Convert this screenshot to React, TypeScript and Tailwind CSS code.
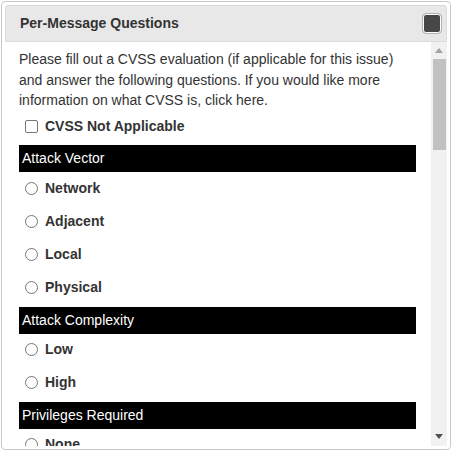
import React from "react";

const Radio = ({ label }: { label: string }) => (
  <div className="h-[33px] flex items-center pl-[6px]">
    <span className="w-[13px] h-[13px] rounded-full border border-[#767676] bg-white shrink-0" />
    <span className="ml-[7px] font-bold text-[14px] text-[#333]">{label}</span>
  </div>
);

const Bar = ({ label }: { label: string }) => (
  <div className="h-[27px] bg-black text-white text-[14px] flex items-center pl-[3px]">{label}</div>
);

export default function App() {
  return (
    <div
      className="ml-[1px] mt-[1px] w-[450px] h-[449px] border border-[#c8c8c8] rounded-[4px] p-[3px] flex flex-col overflow-hidden bg-white"
      style={{ fontFamily: '"Liberation Sans", Arial, sans-serif' }}
    >
      <div className="h-[37px] shrink-0 bg-[#e8e8e8] border border-[#dadada] rounded-t-[3px] flex items-center justify-between pl-[14px] pr-[5px]">
        <span className="font-bold text-[14px] text-[#333]">Per-Message Questions</span>
        <span className="w-[18px] h-[19px] bg-[#474747] border border-white rounded-[3px] outline outline-1 outline-[#b0b0b0]" />
      </div>
      <div className="flex-1 flex min-h-0 overflow-hidden">
        <div className="flex-1 pl-[14px] pr-[15px] pt-[7px] text-[#333] overflow-hidden">
          <p className="text-[14px] leading-[20.5px]">
            Please fill out a CVSS evaluation (if applicable for this issue) and answer the following questions. If you would like more information on what CVSS is, click here.
          </p>
          <div className="h-[22px] flex items-center pl-[6px] mt-[5px]">
            <span className="w-[13px] h-[13px] rounded-[2px] border border-[#767676] bg-white shrink-0" />
            <span className="ml-[7px] font-bold text-[14px]">CVSS Not Applicable</span>
          </div>
          <div className="mt-[7px]">
            <Bar label="Attack Vector" />
            <Radio label="Network" />
            <Radio label="Adjacent" />
            <Radio label="Local" />
            <Radio label="Physical" />
          </div>
          <div className="mt-[3px]">
            <Bar label="Attack Complexity" />
            <div className="-mt-[1px]">
              <Radio label="Low" />
              <Radio label="High" />
            </div>
          </div>
          <div className="mt-[3px]">
            <Bar label="Privileges Required" />
            <div className="-mt-[1px]">
              <Radio label="None" />
            </div>
          </div>
        </div>
        <div className="w-[16px] bg-[#f1f1f1] flex flex-col items-center shrink-0">
          <div className="h-[17px] flex items-center justify-center">
            <svg width="8" height="5" viewBox="0 0 8 5"><path d="M0 5 L4 0 L8 5 Z" fill="#a3a3a3" /></svg>
          </div>
          <div className="w-[13px] h-[91px] bg-[#c1c1c1]" />
          <div className="flex-1" />
          <div className="h-[17px] flex items-center justify-center mb-[1px]">
            <svg width="8" height="5" viewBox="0 0 8 5"><path d="M0 0 L8 0 L4 5 Z" fill="#505050" /></svg>
          </div>
        </div>
      </div>
    </div>
  );
}
